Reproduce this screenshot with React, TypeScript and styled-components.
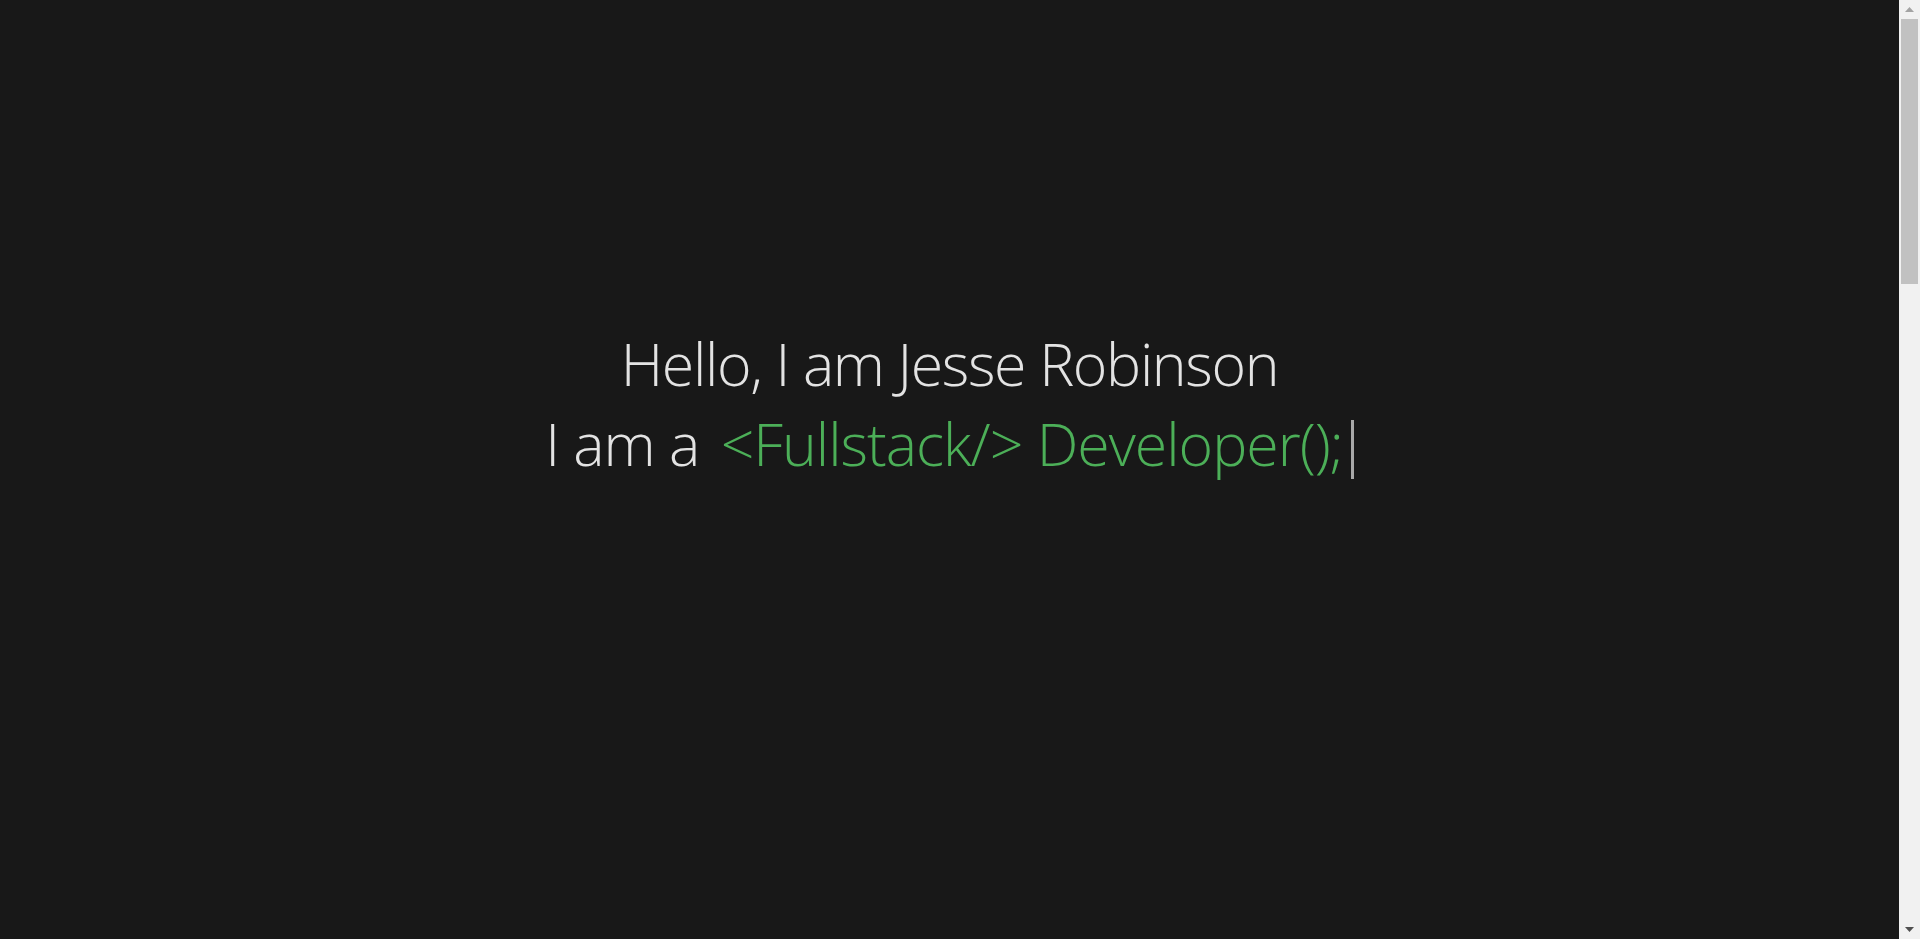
import React from "react";
import styled, { createGlobalStyle } from "styled-components";

const GlobalStyle = createGlobalStyle`
  html, body {
    margin: 0;
    padding: 0;
    background: #181818;
    overflow: hidden;
  }
  body {
    font-family: "Open Sans", "Noto Sans", sans-serif;
  }
`;

const Page = styled.div`
  display: flex;
  height: 100vh;
  background: #181818;
`;

const Main = styled.main`
  flex: 1;
  min-width: 0;
`;

const Hero = styled.section`
  display: flex;
  flex-direction: column;
  align-items: center;
  padding-top: 323px;
`;

const Line = styled.div<{ $tracking: number }>`
  font-family: "Open Sans", "Noto Sans", sans-serif;
  font-weight: 300;
  font-size: 59px;
  line-height: 80px;
  color: #e3e3e3;
  white-space: nowrap;
  letter-spacing: ${(p) => p.$tracking}px;
`;

const Code = styled.span`
  color: #4caf58;
  margin-left: 7px;
`;

const Caret = styled.span`
  display: inline-block;
  width: 3px;
  height: 59px;
  margin-left: 8px;
  background: #a8a8a8;
  vertical-align: -13px;
`;

const ScrollBar = styled.aside`
  width: 21px;
  flex: none;
  display: flex;
  flex-direction: column;
  background: #f1f1f1;
`;

const ArrowButton = styled.div`
  height: 19px;
  flex: none;
  display: flex;
  align-items: center;
  justify-content: center;
`;

const Track = styled.div`
  flex: 1;
  padding: 0 2px;
`;

const Thumb = styled.div`
  height: 265px;
  background: #c1c1c1;
`;

export default function App() {
  return (
    <Page>
      <GlobalStyle />
      <Main>
        <Hero>
          <Line $tracking={-1.35}>Hello, I am Jesse Robinson</Line>
          <Line $tracking={-1}>
            I am a<Code> &lt;Fullstack/&gt; Developer();</Code>
            <Caret />
          </Line>
        </Hero>
      </Main>
      <ScrollBar>
        <ArrowButton>
          <svg width="9" height="5" viewBox="0 0 9 5">
            <polygon points="4.5,0 9,5 0,5" fill="#a3a3a3" />
          </svg>
        </ArrowButton>
        <Track>
          <Thumb />
        </Track>
        <ArrowButton>
          <svg width="9" height="5" viewBox="0 0 9 5">
            <polygon points="0,0 9,0 4.5,5" fill="#505050" />
          </svg>
        </ArrowButton>
      </ScrollBar>
    </Page>
  );
}
